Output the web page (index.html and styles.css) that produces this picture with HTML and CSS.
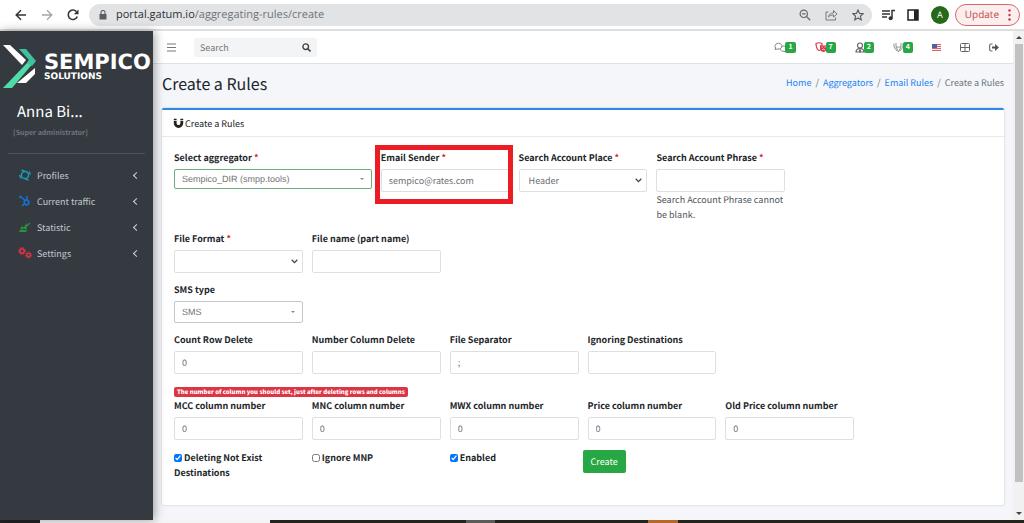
FILE: index.html
```html
<!DOCTYPE html>
<html lang="en">
<head>
<meta charset="utf-8">
<title>Create a Rules</title>
<meta name="viewport" content="width=device-width, initial-scale=1">
<link rel="stylesheet" href="styles.css">
</head>
<body>
<div class="window">
  <header class="browser">
    <nav class="browser-nav" aria-label="Browser">
      <button class="icon-btn" aria-label="Back"><svg width="12" height="12" viewBox="0 0 12 12"><path d="M11 6H1.500M6 1.200 1.200 6 6 10.800" fill="none" stroke="#333" stroke-width="1.500"/></svg></button>
      <button class="icon-btn" aria-label="Forward"><svg width="12" height="12" viewBox="0 0 12 12"><path d="M1 6h9.500M6 1.200 10.800 6 6 10.800" fill="none" stroke="#a3a5a8" stroke-width="1.300"/></svg></button>
      <button class="icon-btn" aria-label="Reload"><svg width="12" height="12" viewBox="0 0 12 12"><path d="M10.300 7.500A4.700 4.700 0 1 1 9.400 2.600" fill="none" stroke="#333" stroke-width="1.600"/><path d="M11.500.500v4.800H6.800z" fill="#333"/></svg></button>
    </nav>
    <div class="address">
      <svg width="8" height="10" viewBox="0 0 8 10"><path d="M0.500 4h7v5.500h-7z" fill="#5a5d61"/><path d="M2 4V2.500a2 2 0 0 1 4 0V4" fill="none" stroke="#5a5d61" stroke-width="1.100"/></svg>
      <span class="url">portal.gatum.io<span class="url-path">/aggregating-rules/create</span></span>
      <button class="icon-btn" aria-label="Zoom"><svg width="12" height="12" viewBox="0 0 12 12"><circle cx="4.800" cy="4.800" r="3.700" fill="none" stroke="#66696d" stroke-width="1.200"/><path d="M3 4.800h3.600M7.500 7.500l3.700 3.700" stroke="#66696d" stroke-width="1.300"/></svg></button>
      <button class="icon-btn" aria-label="Share"><svg width="13" height="12" viewBox="0 0 13 12"><path d="M3.500 3H1v8h9.500V8.500M3.500 8c.5-3 2.500-4 5-4V1.500L12 5 8.500 8V6c-2 0-3.500.3-5 2z" fill="none" stroke="#77797d"/></svg></button>
      <button class="icon-btn" aria-label="Bookmark"><svg width="12" height="12" viewBox="0 0 12 12"><path d="M6 1l1.500 3.400 3.700.3-2.800 2.500.8 3.700L6 9l-3.200 1.900.8-3.700L.8 4.700l3.700-.3z" fill="none" stroke="#55585c" stroke-width="1.100"/></svg></button>
    </div>
    <div class="browser-tools">
      <button class="icon-btn" aria-label="Media"><svg width="13" height="12" viewBox="0 0 13 12"><path d="M0 2h8M0 5h8M0 8h5" stroke="#333" stroke-width="1.600"/><path d="M10 9V1.500h3" fill="none" stroke="#333" stroke-width="1.500"/><circle cx="8.600" cy="9.300" r="2" fill="#333"/></svg></button>
      <button class="icon-btn" aria-label="Side panel"><svg width="12" height="12" viewBox="0 0 12 12"><path d="M1 1h10v10H1z" fill="none" stroke="#222" stroke-width="1.500"/><path d="M7 1h4v10H7z" fill="#222"/></svg></button>
      <button class="avatar">A</button>
      <button class="update">Update <svg width="3" height="12" viewBox="0 0 3 12"><g fill="#c5373c"><circle cx="1.500" cy="1.500" r="1.200"/><circle cx="1.500" cy="6" r="1.200"/><circle cx="1.500" cy="10.500" r="1.200"/></g></svg></button>
    </div>
  </header>

  <div class="app">
    <aside class="sidebar">
      <div class="brand">
        <svg width="34" height="46" viewBox="0 0 34 46"><path d="M1 2h7l16 15-4 5z" fill="#fff"/><path d="M33 25v6l-9 9h-9z" fill="#fff"/><path d="M33 18 10 45H1l24-25 2-3z" fill="#4fdcaa"/><path d="M17 6h7l10 12-4 5-5-3 2-3z" fill="#3fc09c"/></svg>
        <div><div class="brand-name">SEMPICO</div><div class="brand-sub">SOLUTIONS</div></div>
      </div>
      <div class="user">
        <div class="user-name">Anna Bi...</div>
        <div class="user-role">[Super administrator]</div>
      </div>
      <nav class="menu" aria-label="Main">
        <a href="#"><svg width="14" height="12" viewBox="0 0 14 12"><circle cx="7" cy="6" r="3.600" fill="none" stroke="#1b9db8" stroke-width="1.500"/><path d="M3.500 1l3 1.200M11 2.500l1.500 3M1.500 6l1.500 3.500M7.500 10l3 1" stroke="#1b9db8" stroke-width="1.400"/></svg><span>Profiles</span><i class="caret"></i></a>
        <a href="#"><svg width="14" height="12" viewBox="0 0 14 12"><path d="M2 1.500 7.500 5.500M9 1v4M4 11l2-2" stroke="#1671d2" stroke-width="1.500"/><circle cx="8.500" cy="7.500" r="2.300" fill="none" stroke="#1671d2" stroke-width="1.700"/><circle cx="2.300" cy="1.700" r="1.200" fill="#1671d2"/></svg><span>Current traffic</span><i class="caret"></i></a>
        <a href="#"><svg width="14" height="12" viewBox="0 0 14 12"><path d="M2 10.500 4 6l2 1.500L8 4v6.500zM8.500 5 12 2" fill="#27963f" stroke="#27963f" stroke-width="1.200"/><path d="M3 9l2-1 3 1" fill="none" stroke="#343a40"/></svg><span>Statistic</span><i class="caret"></i></a>
        <a href="#"><svg width="14" height="12" viewBox="0 0 14 12"><g fill="none" stroke="#d93444"><circle cx="4" cy="4" r="2.200" stroke-width="1.700"/><circle cx="4" cy="4" r="3.500" stroke-dasharray="1.400 1.400"/><circle cx="10.500" cy="8" r="1.800" stroke-width="1.600"/><circle cx="10.500" cy="8" r="3" stroke-dasharray="1.300 1.300"/></g></svg><span>Settings</span><i class="caret"></i></a>
      </nav>
    </aside>

    <main class="main">
      <div class="topbar">
        <button class="icon-btn" aria-label="Toggle menu"><svg width="9" height="9" viewBox="0 0 9 9"><path d="M0 1h9M0 4.500h9M0 8h9" stroke="#777"/></svg></button>
        <form class="search">
          <input type="search" aria-label="Search" placeholder="Search">
          <button type="button" class="icon-btn" aria-label="Search"><svg width="9" height="9" viewBox="0 0 9 9"><circle cx="3.700" cy="3.700" r="2.800" fill="none" stroke="#444" stroke-width="1.400"/><path d="M5.800 5.800l2.700 2.700" stroke="#444" stroke-width="1.600"/></svg></button>
        </form>
        <div class="tools">
          <a class="tool" href="#" aria-label="Chats"><svg width="13" height="11" viewBox="0 0 13 11"><g fill="#fff" stroke="#888"><path d="M12.500 10l-.8-1.800A3.200 2.600 0 1 0 9 9.200z"/><path d="M1 7.500 1.800 6A3.500 2.900 0 1 1 4 7z"/></g></svg><b class="count">1</b></a>
          <a class="tool" href="#" aria-label="Events"><svg width="13" height="11" viewBox="0 0 13 11"><path d="M1 1.500c2-1 4-1 6 0v3c0 3-2 4-3 4S1 6 1 1.500z" fill="#fff" stroke="#dc3545" stroke-width="1.200"/><path d="M5 3c2 .8 4.500.8 7 0 .5 4-1 7-3.500 7S4.600 7 5 3z" fill="#dc3545"/><path d="M6.500 5h1.300M9.500 5h1.300M7 8l1.500-1L10 8M2.500 3.500h1" stroke="#fff" stroke-width=".8" fill="none"/></svg><b class="count">7</b></a>
          <a class="tool" href="#" aria-label="Users"><svg width="11" height="11" viewBox="0 0 11 11"><g fill="none" stroke="#666" stroke-width="1.200"><circle cx="5" cy="3.500" r="2.500"/><path d="M1 10c0-2 1-3 3-3.500h2C8 7 9 8 9 10zM4.300 7.500 5 10l.7-2.500"/></g></svg><b class="count">2</b></a>
          <a class="tool" href="#" aria-label="Clients"><svg width="12" height="11" viewBox="0 0 12 11"><path d="M1 1.500v3.500L4 9M10 1.500v3.500L7 9M3 1v4l2.500 5L8 5V1M3 5h5" fill="none" stroke="#888" stroke-width=".9"/></svg><b class="count">4</b></a>
          <a class="tool" href="#" aria-label="Language"><svg width="9" height="7" viewBox="0 0 9 7"><path d="M0 0h9v7H0z" fill="#eee"/><path d="M0 .5h9M0 2.500h9M0 4.500h9M0 6.500h9" stroke="#d66670"/><path d="M0 0h5v4H0z" fill="#4d619b"/></svg></a>
          <a class="tool" href="#" aria-label="Layout"><svg width="10" height="9" viewBox="0 0 10 9"><rect x=".5" y=".5" width="9" height="8" rx="1" fill="none" stroke="#666"/><path d="M5 0v9M0 4.500h10" stroke="#666"/></svg></a>
          <a class="tool" href="#" aria-label="Sign out"><svg width="10" height="9" viewBox="0 0 10 9"><path d="M3.500 1H2Q.7 1 .7 2.200v4.600Q.7 8 2 8h1.500" fill="none" stroke="#666" stroke-width="1.100"/><path d="M3 3.500h3V1l4 3.500L6 8V5.500H3z" fill="#555"/></svg></a>
        </div>
      </div>

      <div class="content">
        <div class="page-head">
          <h1>Create a Rules</h1>
          <nav class="crumbs" aria-label="Breadcrumb"><a href="#">Home</a><i>/</i><a href="#">Aggregators</a><i>/</i><a href="#">Email Rules</a><i>/</i><span>Create a Rules</span></nav>
        </div>

        <section class="card">
          <h2 class="card-head"><svg width="11" height="10" viewBox="0 0 11 10"><path d="M2.200 3v2.200a3.300 3.300 0 0 0 6.600 0V3" fill="none" stroke="#222" stroke-width="2.800"/><path d="M.8.700h2.800v1.500H.8zM7.400.700h2.800v1.500H7.400z" fill="#222"/></svg>Create a Rules</h2>
          <form class="form">
            <div class="row">
              <div class="field wide">
                <label for="aggregator">Select aggregator <em>*</em></label>
                <div class="pick valid"><select id="aggregator"><option>Sempico_DIR (smpp.tools)</option></select><i class="tri"></i></div>
              </div>
              <div class="field marked">
                <label for="sender">Email Sender <em>*</em></label>
                <input class="control" id="sender" type="text" value="sempico@rates.com">
              </div>
              <div class="field">
                <label for="place">Search Account Place <em>*</em></label>
                <div class="drop"><select class="control" id="place"><option>Header</option></select><svg width="7" height="5" viewBox="0 0 7 5"><path d="M.7.800 3.500 3.600 6.300.800" fill="none" stroke="#444" stroke-width="1.300"/></svg></div>
              </div>
              <div class="field">
                <label for="phrase">Search Account Phrase <em>*</em></label>
                <input class="control" id="phrase" type="text" aria-describedby="phrase-help">
                <p class="help" id="phrase-help">Search Account Phrase cannot be blank.</p>
              </div>
            </div>

            <div class="row">
              <div class="field">
                <label for="format">File Format <em>*</em></label>
                <div class="drop"><select class="control" id="format"><option></option></select><svg width="7" height="5" viewBox="0 0 7 5"><path d="M.7.800 3.500 3.600 6.300.800" fill="none" stroke="#444" stroke-width="1.300"/></svg></div>
              </div>
              <div class="field"><label for="filename">File name (part name)</label><input class="control" id="filename" type="text"></div>
            </div>

            <div class="row">
              <div class="field">
                <label for="sms">SMS type</label>
                <div class="pick sms"><select id="sms"><option>SMS</option></select><i class="tri"></i></div>
              </div>
            </div>

            <div class="row">
              <div class="field"><label for="rows">Count Row Delete</label><input class="control" id="rows" type="text" value="0"></div>
              <div class="field"><label for="cols">Number Column Delete</label><input class="control" id="cols" type="text"></div>
              <div class="field"><label for="sep">File Separator</label><input class="control" id="sep" type="text" value=";"></div>
              <div class="field"><label for="ignore">Ignoring Destinations</label><input class="control" id="ignore" type="text"></div>
            </div>

            <div class="note-line"><strong class="note">The number of column you should set, just after deleting rows and columns</strong></div>
            <div class="row">
              <div class="field"><label for="mcc">MCC column number</label><input class="control" id="mcc" type="text" value="0"></div>
              <div class="field"><label for="mnc">MNC column number</label><input class="control" id="mnc" type="text" value="0"></div>
              <div class="field"><label for="mwx">MWX column number</label><input class="control" id="mwx" type="text" value="0"></div>
              <div class="field"><label for="price">Price column number</label><input class="control" id="price" type="text" value="0"></div>
              <div class="field"><label for="old">Old Price column number</label><input class="control" id="old" type="text" value="0"></div>
            </div>

            <div class="row">
              <div class="field"><label class="check"><input type="checkbox" checked> Deleting Not Exist Destinations</label></div>
              <div class="field"><label class="check"><input type="checkbox"> Ignore MNP</label></div>
              <div class="field"><label class="check"><input type="checkbox" checked> Enabled</label></div>
              <div class="field"><button type="button" class="create">Create</button></div>
            </div>
          </form>
        </section>
      </div>
    </main>

    <div class="scroll" aria-hidden="true"><i class="up"></i><div class="thumb"></div><i class="down"></i></div>
  </div>
  <div class="taskbar"><i class="start"></i><i class="find"></i><i class="task"></i><i class="gray"></i><i class="task"></i><i class="orange"></i><i class="task rest"></i></div>
</div>
</body>
</html>
```

FILE: styles.css
```css
*, *::before, *::after { box-sizing: border-box; }
body {
  margin: 0;
  font-family: "Noto Sans CJK JP", "Open Sans", sans-serif;
  font-size: 9px;
  line-height: 15px;
  color: #212529;
  background: #fff;
  text-rendering: geometricPrecision;
}
button, input, select { font: inherit; color: inherit; margin: 0; text-rendering: inherit; }
a { color: #1a82f7; text-decoration: none; }
i, em { font-style: normal; }
svg { display: block; flex: none; }
.icon-btn { display: flex; border: 0; padding: 0; background: none; }
.window { display: flex; flex-direction: column; min-height: 100vh; }

/* browser chrome */
.browser {
  display: flex;
  align-items: center;
  height: 31px;
  padding: 0 4px 0 15px;
  border-bottom: 2px solid #dedede;
  font-family: "Open Sans", "Noto Sans", sans-serif;
}
.browser-nav { display: flex; gap: 14px; width: 74px; }
.address {
  display: flex;
  flex: 1;
  align-items: center;
  gap: 14px;
  height: 22px;
  padding: 0 8px 0 10px;
  border-radius: 11px;
  background: #e2e3e5;
}
.url { flex: 1; margin-left: -5px; font-size: 11px; color: #303236; white-space: nowrap; }
.url-path { color: #717478; }
.browser-tools { display: flex; align-items: center; gap: 12px; padding-left: 10px; }
.avatar { width: 18px; height: 18px; border: 0; border-radius: 50%; padding: 0; background: #27691b; color: #fff; font-size: 9px; }
.update {
  display: flex;
  align-items: center;
  gap: 9px;
  height: 22px;
  margin-left: -6px;
  padding: 0 8px 0 9px;
  border: 1px solid #d9666a;
  border-radius: 11px;
  background: #fbeeee;
  color: #c5464a;
  font-size: 10px;
}

.app { display: flex; flex: 1; }

/* sidebar */
.sidebar { flex: none; width: 153px; background: #343a40; color: #c2c7d0; box-shadow: 2px 0 9px rgba(0, 0, 0, .35); z-index: 1; }
.brand { display: flex; gap: 8px; padding: 12px 0 0 2px; height: 70px; color: #fff; font-family: "DejaVu Sans", sans-serif; font-weight: bold; }
.brand-name { margin-top: 9px; font-size: 21px; line-height: 20px; }
.brand-sub { font-size: 9px; line-height: 11px; }
.user { margin: 0 8px; padding-bottom: 12px; border-bottom: 1px solid #4b545c; }
.user-name { padding-left: 9px; font-size: 15px; line-height: 22px; color: #fff; }
.user-role { margin-top: 3px; padding-left: 5px; font-size: 7px; font-weight: bold; color: #6f757b; }
.menu { display: flex; flex-direction: column; gap: 4px; padding: 10px 15px 0 18px; }
.menu a { display: flex; align-items: center; gap: 5px; height: 22px; color: #c2c7d0; }
.menu span { flex: 1; }
.caret { width: 5px; height: 5px; margin-right: -1px; border: solid #d0d4da; border-width: 0 0 1px 1px; transform: rotate(45deg); }

/* top bar */
.main { display: flex; flex: 1; flex-direction: column; min-width: 0; background: #f4f6f9; }
.topbar { display: flex; align-items: center; height: 33px; padding: 0 14px; border-bottom: 1px solid #dee2e6; background: #fff; }
.search { display: flex; align-items: center; width: 123px; height: 19px; margin-left: 18px; padding-right: 6px; border-radius: 2px; background: #f2f4f6; }
.search input { flex: 1; width: 50px; padding: 0 6px; border: 0; background: none; outline: 0; }
.search input::placeholder { color: #777; opacity: 1; }
.tools { display: flex; align-items: center; gap: 19px; margin-left: auto; }
.tool { display: flex; align-items: center; }
.count { height: 11px; padding: 0 3px; margin-left: -2px; border-radius: 2px; background: #28a745; color: #fff; font-size: 7px; line-height: 11px; }

/* content */
.content { padding: 0 9px 13px; }
.page-head { display: flex; justify-content: space-between; height: 44px; padding-top: 7px; }
h1 { margin: 0; font-size: 16px; font-weight: normal; line-height: 24px; }
.crumbs { display: flex; gap: 4px; padding-top: 4px; color: #6c757d; }
.card { border-top: 2px solid #2f88e8; border-radius: 2px; background: #fff; box-shadow: 0 0 2px rgba(0, 0, 0, .25); }
.card-head { display: flex; align-items: center; gap: 1px; height: 27px; margin: 0; padding: 0 11px; border-bottom: 1px solid #e8e9ea; font-size: 9px; font-weight: normal; }

/* form */
.form { padding: 13px 12px 12px; }
.row { display: grid; grid-template-columns: repeat(12, 1fr); column-gap: 9px; margin-bottom: 9px; }
.row:last-child { padding-top: 1px; }
.field { grid-column: span 2; min-width: 0; }
.wide { grid-column: span 3; }
.field label { display: block; margin-bottom: 4px; font-weight: bold; white-space: nowrap; }
.field em { color: #e02020; }
.control { display: block; width: 100%; height: 23px; padding: 0 7px; border: 1px solid #dde0e3; border-radius: 2px; background: #fff; color: #6b7075; outline: 0; }
select { appearance: none; }
.drop, .pick { display: grid; align-items: center; }
.drop > *, .pick > * { grid-area: 1 / 1; }
.drop svg { justify-self: end; margin-right: 5px; pointer-events: none; }
.drop select { padding-left: 9px; }
.pick { height: 20px; border: 1px solid #aaa; border-radius: 2px; font-family: "Liberation Sans", Arial, sans-serif; }
.valid { border-color: #69ad7b; }
.sms { height: 22px; border-color: #c4c8cc; }
.pick select { width: 100%; padding: 0 7px; border: 0; background: none; color: #737373; outline: 0; }
.tri { justify-self: end; margin-right: 7px; border: solid transparent; border-width: 2px 2px 0; border-top-color: #888; pointer-events: none; }
.help { margin: 0; color: #50555a; }
.marked { position: relative; }
.marked::after { content: ""; position: absolute; inset: -5px -3px auto -6px; height: 59px; border: 5px solid #ec1c24; pointer-events: none; }
.note-line { display: flex; padding-top: 4px; margin-bottom: 1px; }
.note { padding: 0 3px; border-radius: 2px; background: #dc3545; color: #fff; font-size: 6px; font-weight: 900; line-height: 10px; }
.field .check { white-space: normal; }
.check input { width: 8px; height: 8px; vertical-align: -1px; }
.create { height: 23px; margin-left: -5px; padding: 0 8px; border: 0; border-radius: 2px; background: #28a745; color: #fff; }

/* scroll bar */
.scroll { display: flex; flex-direction: column; align-items: center; width: 11px; padding: 5px 0; background: #f1f1f1; }
.thumb { flex: 1; width: 8px; margin: 5px 0 30px; background: #c1c1c1; }
.up, .down { border: solid transparent; border-width: 0 3px 3px; border-bottom-color: #444; }
.down { border-width: 3px 3px 0; border-top-color: #444; }

/* desktop strip */
.taskbar { display: flex; height: 3px; background: #fff; }
.start { width: 40px; background: #222; }
.find { width: 230px; background: #f4f4f4; }
.task { width: 196px; background: #23251b; }
.gray { width: 29px; background: #5c5c58; }
.taskbar .gray + .task { width: 153px; }
.orange { width: 30px; background: #b4692a; }
.taskbar .rest { flex: 1; }
```
